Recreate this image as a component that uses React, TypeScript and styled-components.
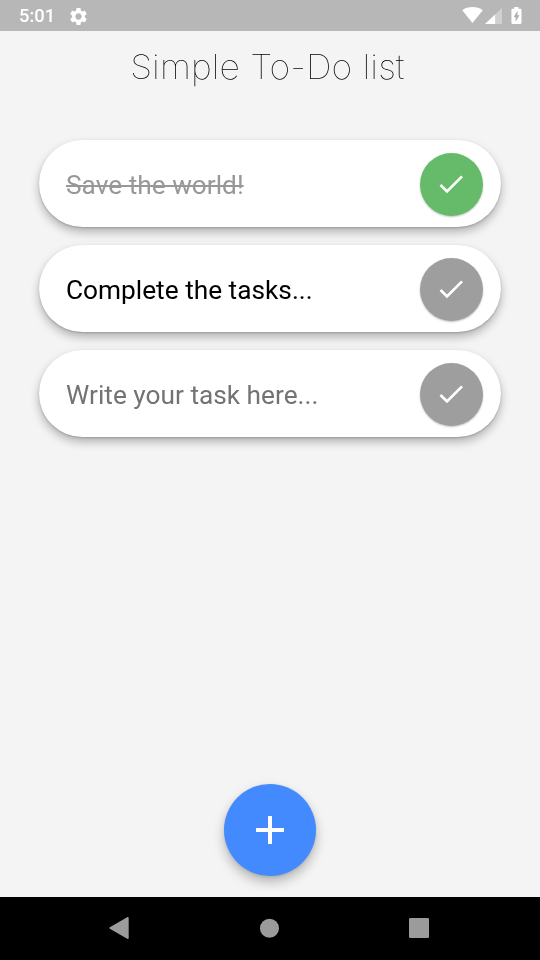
import React from "react";
import styled, { createGlobalStyle, css } from "styled-components";

const GlobalStyle = createGlobalStyle`
  * { box-sizing: border-box; }
  body { margin: 0; background: #f4f4f4; }
`;

const Screen = styled.div`
  display: flex;
  flex-direction: column;
  width: 540px;
  height: 960px;
  overflow: hidden;
  background: #f4f4f4;
  font-family: Roboto, sans-serif;
`;

const StatusBar = styled.header`
  display: flex;
  align-items: center;
  height: 31px;
  flex: none;
  padding: 1px 18px 0 19px;
  background: #b7b7b7;
  color: #fff;
`;

const Clock = styled.span`
  font-size: 18.4px;
  font-weight: 500;
  line-height: 30px;
  width: 49px;
  will-change: transform;
`;

const StatusIcons = styled.div`
  display: flex;
  align-items: center;
  margin-left: auto;
  padding-bottom: 1px;
`;

const SignalIcon = styled.svg`
  margin: 1px 9px 0 2px;
`;

const Title = styled.h1`
  margin: 0;
  height: 109px;
  flex: none;
  padding: 14px 5px 0 0;
  font-family: Inter, sans-serif;
  font-size: 33.5px;
  font-weight: 100;
  line-height: 44px;
  letter-spacing: 0.1px;
  text-align: center;
  white-space: nowrap;
  color: #000;
  transform: scaleX(1.065);
  will-change: transform;
`;

const TaskList = styled.ul`
  display: flex;
  flex-direction: column;
  gap: 18px;
  margin: 0;
  padding: 0 39px;
  list-style: none;
`;

const TaskCard = styled.li`
  display: flex;
  align-items: center;
  justify-content: space-between;
  height: 87px;
  padding: 1px 18.5px 0 26.5px;
  border-radius: 44px;
  background: #fff;
  box-shadow: 0 5px 10px rgba(0, 0, 0, 0.27), 0 1px 2px rgba(0, 0, 0, 0.18);
`;

type TaskState = "done" | "open" | "empty";

const TaskText = styled.span<{ $state: TaskState }>`
  font-size: 26.25px;
  line-height: 32px;
  white-space: nowrap;
  padding-top: 2px;
  will-change: transform;
  color: ${({ $state }) =>
    $state === "done" ? "#989898" : $state === "open" ? "#000" : "#737373"};
  ${({ $state }) =>
    $state === "done" &&
    css`
      text-decoration: line-through;
      text-decoration-thickness: 1.5px;
    `}
`;

const CheckButton = styled.button<{ $done: boolean }>`
  display: grid;
  place-items: center;
  width: 63px;
  height: 63px;
  padding: 0;
  border: 0;
  border-radius: 50%;
  background: ${({ $done }) => ($done ? "#66bb6a" : "#9e9e9e")};
  box-shadow: 0 1px 2px rgba(0, 0, 0, 0.25);
`;

const Footer = styled.div`
  display: flex;
  justify-content: center;
  margin-top: auto;
  padding-bottom: 21px;
`;

const AddButton = styled.button`
  display: grid;
  place-items: center;
  width: 92px;
  height: 92px;
  padding: 0;
  border: 0;
  border-radius: 50%;
  background: #448aff;
  box-shadow: 0 6px 12px rgba(0, 0, 0, 0.26), 0 1px 3px rgba(0, 0, 0, 0.1);
`;

const NavBar = styled.nav`
  display: grid;
  grid-template-columns: 150px 150px 150px;
  justify-content: center;
  justify-items: center;
  align-items: center;
  height: 63px;
  flex: none;
  padding: 0 2px 1px 0;
  background: #000;
`;

const tasks: { text: string; state: TaskState }[] = [
  { text: "Save the world!", state: "done" },
  { text: "Complete the tasks...", state: "open" },
  { text: "Write your task here...", state: "empty" },
];

export default function App() {
  return (
    <>
      <GlobalStyle />
      <Screen>
        <StatusBar>
          <Clock>5:01</Clock>
          <svg width="21" height="21" viewBox="0 0 24 24" fill="#fff">
            <path d="M19.14 12.94c.04-.3.06-.61.06-.94 0-.32-.02-.64-.07-.94l2.03-1.58c.18-.14.23-.41.12-.61l-1.92-3.32c-.12-.22-.37-.29-.59-.22l-2.39.96c-.5-.38-1.03-.7-1.62-.94l-.36-2.54c-.04-.24-.24-.41-.48-.41h-3.84c-.24 0-.43.17-.47.41l-.36 2.54c-.59.24-1.13.57-1.62.94l-2.39-.96c-.22-.08-.47 0-.59.22L2.74 8.87c-.12.21-.08.47.12.61l2.03 1.58c-.05.3-.09.63-.09.94s.02.64.07.94l-2.03 1.58c-.18.14-.23.41-.12.61l1.92 3.32c.12.22.37.29.59.22l2.39-.96c.5.38 1.03.7 1.62.94l.36 2.54c.05.24.24.41.48.41h3.84c.24 0 .44-.17.47-.41l.36-2.54c.59-.24 1.13-.56 1.62-.94l2.39.96c.22.08.47 0 .59-.22l1.92-3.32c.12-.22.07-.47-.12-.61l-2.01-1.58zM12 15.6c-1.98 0-3.6-1.62-3.6-3.6s1.62-3.6 3.6-3.6 3.6 1.62 3.6 3.6-1.62 3.6-3.6 3.6z" />
          </svg>
          <StatusIcons>
            <svg width="21" height="17" viewBox="0 0 21 17" fill="#fff">
              <path d="M0.2 3.2C3 1.1 6.500 0 10.500 0s7.500 1.100 10.300 3.200L10.500 16z" />
            </svg>
            <SignalIcon width="17" height="16" viewBox="0 0 16 16" preserveAspectRatio="none" fill="#fff">
              <path d="M16 0v16H0z" fillOpacity="0.35" />
              <path d="M9.500 6.500v9.500H0z" />
            </SignalIcon>
            <svg width="11" height="17" viewBox="0 0 11 17">
              <path
                d="M3.200 0h4.300v1.700h1.900c.6 0 1.100.5 1.100 1.100v13c0 .6-.5 1.100-1.100 1.100H1.500c-.6 0-1.100-.5-1.100-1.100v-13c0-.6.5-1.100 1.100-1.100h1.700z"
                fill="#fff"
              />
              <path d="M6.500 3.800v4.400h2l-3.900 6.500v-4.700H2.700z" fill="#b0b0b0" />
            </svg>
          </StatusIcons>
        </StatusBar>
        <Title>Simple To-Do list</Title>
        <TaskList>
          {tasks.map(({ text, state }) => (
            <TaskCard key={text}>
              <TaskText $state={state}>{text}</TaskText>
              <CheckButton $done={state === "done"} aria-label="Toggle task">
                <svg width="32" height="32" viewBox="0 0 24 24" fill="#fff">
                  <path d="M9 16.170L4.830 12l-1.420 1.410L9 19 21 7l-1.410-1.410z" />
                </svg>
              </CheckButton>
            </TaskCard>
          ))}
        </TaskList>
        <Footer>
          <AddButton aria-label="Add task">
            <svg width="48" height="48" viewBox="0 0 24 24" fill="#fff">
              <path d="M19 13h-6v6h-2v-6H5v-2h6V5h2v6h6v2z" />
            </svg>
          </AddButton>
        </Footer>
        <NavBar>
          <svg width="20" height="22" viewBox="0 0 20 22" fill="#9b9b9b">
            <path d="M18.200.2c.8-.4 1.500 0 1.500.9v19.800c0 .9-.7 1.300-1.500.9L.8 11.700c-.7-.4-.7-1 0-1.400z" />
          </svg>
          <svg width="20" height="20" viewBox="0 0 20 20" fill="#9b9b9b">
            <circle cx="10.500" cy="10.300" r="9.500" />
          </svg>
          <svg width="20" height="20" viewBox="0 0 20 20" fill="#9b9b9b">
            <rect width="20" height="20" rx="1.300" />
          </svg>
        </NavBar>
      </Screen>
    </>
  );
}
